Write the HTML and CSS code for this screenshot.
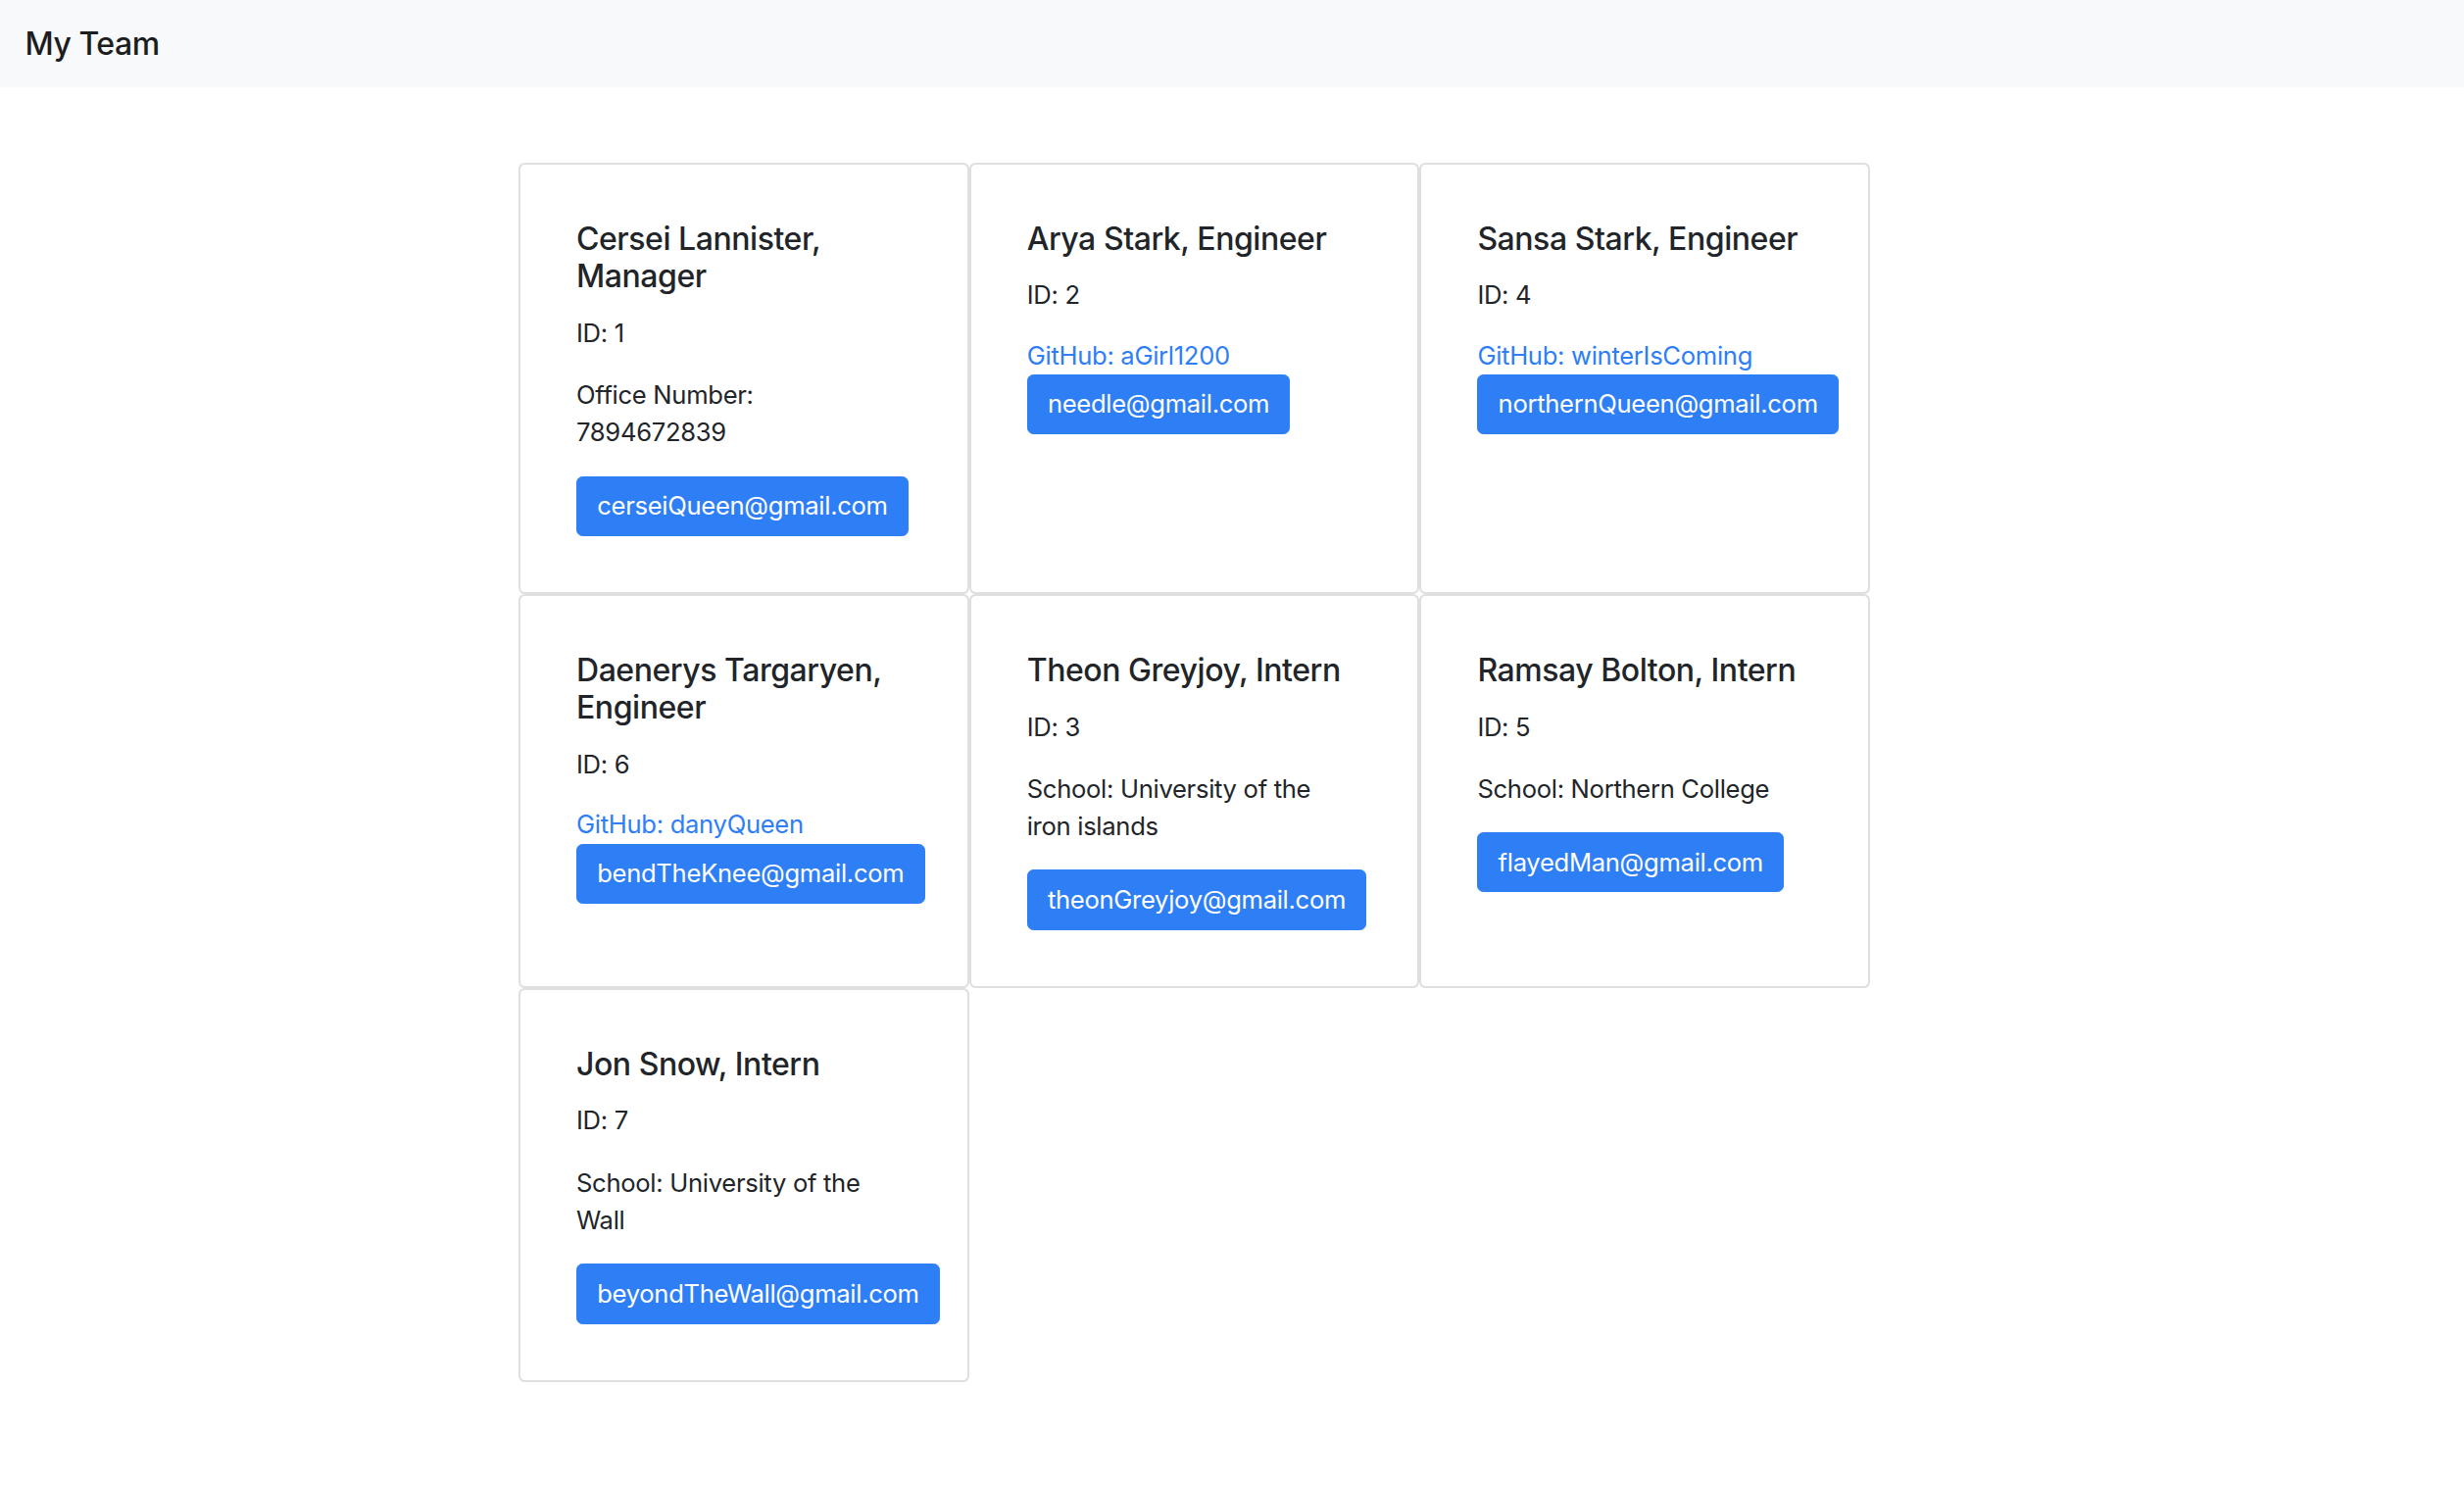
FILE: index.html
```html
<!DOCTYPE html>
<html lang="en">
<head>
<meta charset="utf-8">
<title>My Team</title>
<link rel="stylesheet" href="styles.css">
</head>
<body>
<nav class="navbar">
  <span class="navbar-brand">My Team</span>
</nav>
<main class="team">
  <div class="card">
    <div class="card-body">
      <h5 class="card-title">Cersei Lannister, Manager</h5>
      <p class="card-text">ID: 1</p>
      <p class="card-text">Office Number: 7894672839</p>
      <a class="btn" href="mailto:cerseiQueen@gmail.com">cerseiQueen@gmail.com</a>
    </div>
  </div>
  <div class="card">
    <div class="card-body">
      <h5 class="card-title">Arya Stark, Engineer</h5>
      <p class="card-text">ID: 2</p>
      <a class="github" href="#">GitHub: aGirl1200</a>
      <a class="btn" href="mailto:needle@gmail.com">needle@gmail.com</a>
    </div>
  </div>
  <div class="card">
    <div class="card-body">
      <h5 class="card-title">Sansa Stark, Engineer</h5>
      <p class="card-text">ID: 4</p>
      <a class="github" href="#">GitHub: winterIsComing</a>
      <a class="btn" href="mailto:northernQueen@gmail.com">northernQueen@gmail.com</a>
    </div>
  </div>
  <div class="card">
    <div class="card-body">
      <h5 class="card-title">Daenerys Targaryen, Engineer</h5>
      <p class="card-text">ID: 6</p>
      <a class="github" href="#">GitHub: danyQueen</a>
      <a class="btn" href="mailto:bendTheKnee@gmail.com">bendTheKnee@gmail.com</a>
    </div>
  </div>
  <div class="card">
    <div class="card-body">
      <h5 class="card-title">Theon Greyjoy, Intern</h5>
      <p class="card-text">ID: 3</p>
      <p class="card-text">School: University of the iron islands</p>
      <a class="btn" href="mailto:theonGreyjoy@gmail.com">theonGreyjoy@gmail.com</a>
    </div>
  </div>
  <div class="card">
    <div class="card-body">
      <h5 class="card-title">Ramsay Bolton, Intern</h5>
      <p class="card-text">ID: 5</p>
      <p class="card-text">School: Northern College</p>
      <a class="btn" href="mailto:flayedMan@gmail.com">flayedMan@gmail.com</a>
    </div>
  </div>
  <div class="card">
    <div class="card-body">
      <h5 class="card-title">Jon Snow, Intern</h5>
      <p class="card-text">ID: 7</p>
      <p class="card-text">School: University of the Wall</p>
      <a class="btn" href="mailto:beyondTheWall@gmail.com">beyondTheWall@gmail.com</a>
    </div>
  </div>
</main>
</body>
</html>
```
FILE: styles.css
```css
* { box-sizing: border-box; }

html, body {
  margin: 0;
  padding: 0;
  background: #ffffff;
}

body {
  font-family: Inter, "Noto Sans", "Liberation Sans", sans-serif;
  font-size: 25.6px;
  line-height: 38.4px;
  letter-spacing: -0.3px;
  color: #212529;
}

.navbar {
  display: flex;
  align-items: center;
  background: #f8f9fa;
  padding: 12.6px 25.6px;
}

.navbar-brand {
  display: inline-block;
  padding: 8px 0;
  font-size: 32px;
  line-height: 48px;
  font-weight: 500;
  letter-spacing: -0.5px;
  color: #1c1d1f;
  white-space: nowrap;
}

.team {
  display: grid;
  grid-template-columns: repeat(3, 459.7px);
  margin: 76.6px 0 0 529px;
  padding-bottom: 80px;
}

.card {
  border: 2px solid #dfdfdf;
  border-radius: 6.4px;
  background: #fff;
  min-width: 0;
}

.card-body {
  display: flex;
  flex-direction: column;
  align-items: flex-start;
  padding: 57px 68px 57px 57px;
}

.card-title {
  margin: 0 0 19.2px;
  font-size: 32px;
  line-height: 38.4px;
  font-weight: 500;
  letter-spacing: -0.45px;
  color: #212529;
}

.card-text {
  margin: 0 0 24.8px;
}

.github {
  display: block;
  margin-top: -2px;
  color: #2e7ef6;
  text-decoration: none;
}

.btn {
  display: inline-block;
  padding: 10.5px 20.2px;
  border: 1px solid #2e7ef6;
  border-radius: 6.4px;
  background: #2e7ef6;
  color: #ffffff;
  font-size: 25.6px;
  line-height: 38.4px;
  text-decoration: none;
  white-space: nowrap;
}
```
